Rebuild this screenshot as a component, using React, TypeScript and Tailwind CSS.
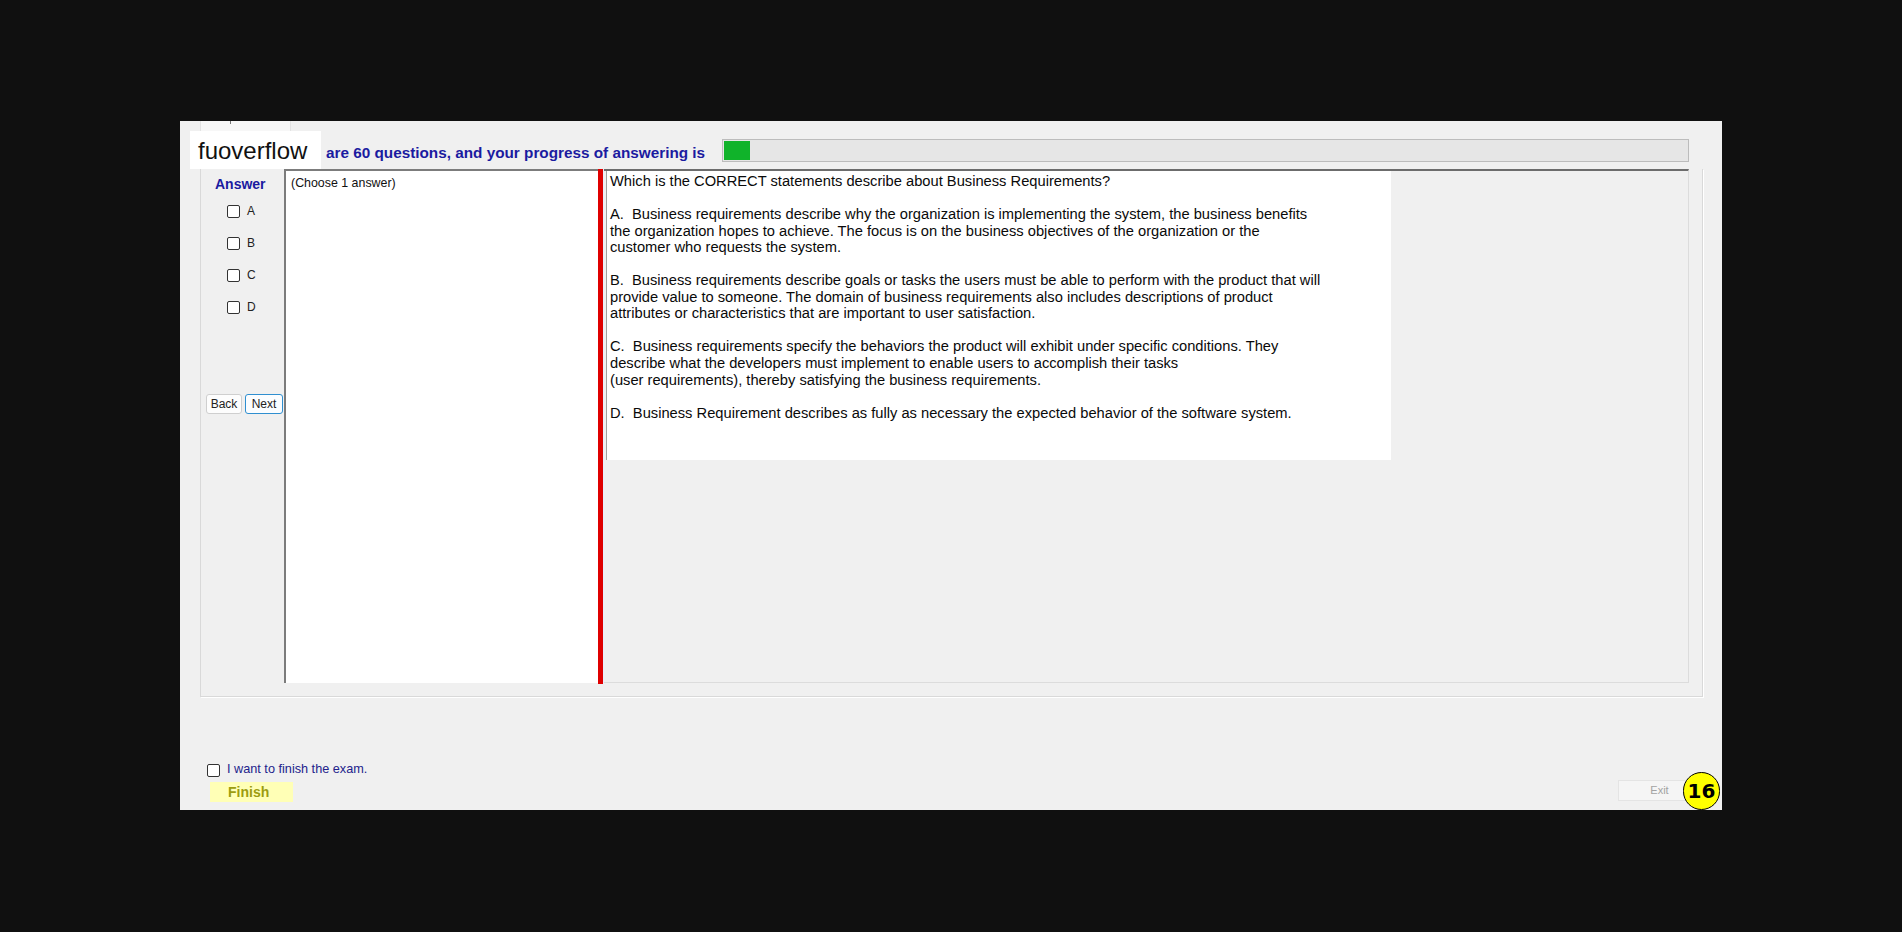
import React from "react";

const question = `Which is the CORRECT statements describe about Business Requirements?

A.  Business requirements describe why the organization is implementing the system, the business benefits
the organization hopes to achieve. The focus is on the business objectives of the organization or the
customer who requests the system.

B.  Business requirements describe goals or tasks the users must be able to perform with the product that will
provide value to someone. The domain of business requirements also includes descriptions of product
attributes or characteristics that are important to user satisfaction.

C.  Business requirements specify the behaviors the product will exhibit under specific conditions. They
describe what the developers must implement to enable users to accomplish their tasks
(user requirements), thereby satisfying the business requirements.

D.  Business Requirement describes as fully as necessary the expected behavior of the software system.`;

function Box() {
  // plain windows-style checkbox square
  return <span className="block w-[13px] h-[13px] shrink-0 rounded-[2px] border border-[#333333] bg-white" />;
}

export default function App() {
  return (
    <div
      className="w-[1902px] h-[932px] bg-[#101010] pt-[121px] pl-[180px]"
      style={{ fontFamily: '"Liberation Sans", Arial, sans-serif' }}
    >
      <div className="relative flex flex-col w-[1542px] h-[689px] bg-[#f0f0f0]">
        {/* leftover tab header */}
        <div className="flex h-[10px] pl-[20px]">
          <div className="relative w-[91px] h-full bg-[#f7f7f7] border-x border-[#e3e3e3]">
            <span className="absolute left-[29px] top-0 w-[1px] h-[3px] bg-[#777]" />
          </div>
        </div>

        {/* header: brand, progress text, progress bar */}
        <div className="flex items-center justify-between h-[38px] pl-[10px] pr-[33px]">
          <div className="flex items-center">
            <div className="flex items-center w-[131px] h-[38px] bg-white pl-[8px] pt-[2px] text-[24px] text-[#111]">
              fuoverflow
            </div>
            <div className="ml-[5px] mt-[6px] text-[15.3px] font-bold text-[#1b1ba0]">
              are 60 questions, and your progress of answering is
            </div>
          </div>
          <div className="flex w-[967px] h-[23px] border border-[#bcbcbc] bg-[#e6e6e6] p-[1px]">
            <div className="w-[26px] h-full bg-[#10b32a]" />
          </div>
        </div>

        {/* group box */}
        <div className="flex w-[1503px] h-[528px] ml-[20px] pl-[2px] border-x border-b border-[#d9d9d9] shadow-[1px_1px_0_#ffffff]">
          {/* answer column */}
          <div className="flex flex-col w-[81px] pt-[7px]">
            <div className="pl-[12px] text-[14px] leading-[16px] font-bold text-[#1a1aa0]">Answer</div>
            <div className="mt-[3px] flex flex-col">
              {["A", "B", "C", "D"].map((l) => (
                <div key={l} className="flex items-center h-[32px] pl-[24px] gap-[7px] text-[12px] text-[#222]">
                  <Box />
                  <span>{l}</span>
                </div>
              ))}
            </div>
            <div className="mt-[71px] flex gap-[3px] pl-[3px]">
              <button className="w-[36px] h-[20px] rounded-[3px] border border-[#cfcfcf] bg-[#fdfdfd] text-[12px] text-[#222]">
                Back
              </button>
              <button className="w-[38px] h-[20px] rounded-[3px] border border-[#2f8fd0] bg-[#fbfdff] text-[12px] text-[#222]">
                Next
              </button>
            </div>
          </div>

          {/* answer list */}
          <div className="w-[314px] h-[514px] bg-white border-l-2 border-t-2 border-[#7c7c7c] pl-[5px] pt-[5px] text-[12.4px] leading-[15px] text-[#111]">
            (Choose 1 answer)
          </div>

          {/* splitter */}
          <div className="w-[6px] h-[515px] bg-[#df0000] border-r border-[#e6eeff]" />

          {/* question panel */}
          <div className="w-[1085px] h-[514px] border-t-2 border-[#6c6c6c] border-r border-b border-r-[#dcdcdc] border-b-[#dcdcdc] pl-[2px]">
            <div className="w-[785px] h-[289px] bg-white border-l border-[#a0a0a0] pl-[3px] pt-[2px] text-[14.7px] leading-[16.55px] text-[#0a0a0a] whitespace-pre">
              {question}
            </div>
          </div>
        </div>

        {/* footer */}
        <div className="mt-auto flex items-end justify-between pl-[27px] pr-[21px]">
          <div className="flex flex-col mb-[8px]">
            <label className="flex items-center h-[14px] gap-[7px] text-[12.7px] text-[#23238c]">
              <Box />
              <span>I want to finish the exam.</span>
            </label>
            <button className="mt-[5px] ml-[3px] w-[83px] h-[20px] bg-[#ffffb6] pl-[18px] text-left text-[14px] font-bold text-[#9c9c10]">
              Finish
            </button>
          </div>
          <button className="mb-[9px] w-[83px] h-[21px] border border-[#e4e4e4] bg-[#f5f5f5] text-[11px] text-[#a3a3a3]">
            Exit
          </button>
        </div>

        {/* number badge over the corner */}
        <div
          className="absolute right-[2px] bottom-0 flex items-center justify-center w-[37px] h-[38px] rounded-full border-[1.5px] border-black bg-[#ffff00] text-[20px] font-bold text-black"
          style={{ fontFamily: '"DejaVu Sans", sans-serif' }}
        >
          16
        </div>
      </div>
    </div>
  );
}
